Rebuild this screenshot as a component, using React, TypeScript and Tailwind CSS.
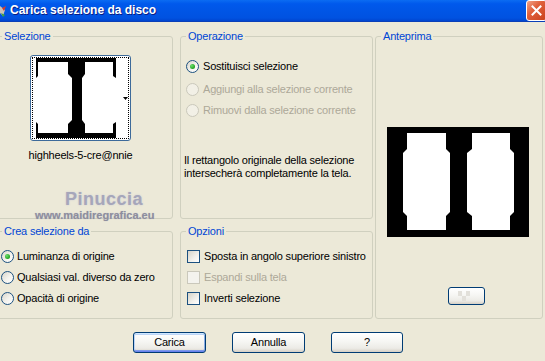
import React from "react";

function Radio({ checked = false, disabled = false }: { checked?: boolean; disabled?: boolean }) {
  return (
    <div
      className={
        "w-[13px] h-[13px] rounded-full border flex items-center justify-center shrink-0 " +
        (disabled
          ? "border-[#CAC8BB] bg-[#F2F0E6]"
          : "border-[#1C5180] bg-[linear-gradient(135deg,#D8D5CA_0%,#F4F3EE_55%,#FFFFFF_100%)]")
      }
    >
      {checked && (
        <div className="w-[5px] h-[5px] rounded-full bg-[radial-gradient(circle_at_35%_35%,#6CE06C_0%,#21A121_70%,#1A861A_100%)]" />
      )}
    </div>
  );
}

function Check({ disabled = false }: { disabled?: boolean }) {
  return (
    <div
      className={
        "w-[13px] h-[13px] border shrink-0 " +
        (disabled
          ? "border-[#CAC8BB] bg-[#F4F3EE]"
          : "border-[#1C5180] bg-[linear-gradient(135deg,#D6D3C8_0%,#F2F1EC_60%,#FFFFFF_100%)]")
      }
    />
  );
}

function XPButton({ label, w, def = false }: { label: string; w: string; def?: boolean }) {
  return (
    <div
      className={
        w +
        " h-[21px] rounded-[3px] border border-[#003C74] flex items-center justify-center text-[11px] text-black bg-[linear-gradient(180deg,#FFFFFF_0%,#F6F6F3_45%,#ECEBE6_80%,#D6D0C5_100%)] " +
        (def
          ? "shadow-[inset_0_1px_0_#CEE7FF,inset_0_-1px_0_#6982EE,inset_1px_0_0_#BCD4F6,inset_-1px_0_0_#89ADE4,inset_0_2px_0_#BCD4F6,inset_0_-2px_0_#7D99EA]"
          : "")
      }
    >
      {label}
    </div>
  );
}

function Legend({ children }: { children: React.ReactNode }) {
  return (
    <legend className="ml-[5px] px-[2px] text-[#0046D5] text-[11px] leading-[13px]">{children}</legend>
  );
}

export default function App() {
  return (
    <div className="w-[545px] h-[361px] overflow-hidden bg-[#ECE9D8] flex flex-col font-['Liberation_Sans',Arial,sans-serif] text-[11px] leading-[13px] tracking-[-0.2px] text-black">
      {/* Title bar */}
      <div className="h-[22px] shrink-0 flex items-center bg-[linear-gradient(180deg,#0B6CF2_0%,#0059EC_18%,#0055E5_55%,#0052E1_85%,#0045CF_100%)] border-b border-[#0A3FB8]">
        <svg width="16" height="16" viewBox="0 0 16 16" className="-ml-[9px] shrink-0">
          <path d="M9 3 L14 7 L12 13 L8 9 Z" fill="#C9C2B8" />
          <path d="M11 5 L15 3 L13 8 Z" fill="#D83A2A" />
          <path d="M10 10 L14 12 L12 14 Z" fill="#3BA33B" />
        </svg>
        <span className="ml-[3px] text-white font-bold text-[12px] tracking-normal [text-shadow:1px_1px_0_#0A1C83]">
          Carica selezione da disco
        </span>
        <div className="ml-auto -mr-[2px] -mt-[1px] w-[21px] h-[21px] rounded-[3px] border border-white flex items-center justify-center bg-[linear-gradient(135deg,#F2A488_0%,#E0603B_40%,#C9421E_100%)]">
          <svg width="11" height="11" viewBox="0 0 11 11">
            <path d="M1.5 1.5 L9.5 9.5 M9.5 1.5 L1.5 9.5" stroke="white" strokeWidth="2" strokeLinecap="square" />
          </svg>
        </div>
      </div>

      {/* Content */}
      <div className="flex mt-[8px] -ml-[4px]">
        {/* Left column */}
        <div className="w-[177px] flex flex-col gap-[6px] shrink-0">
          <fieldset className="h-[189px] border border-[#D0D0BF] rounded-[3px]">
            <Legend>Selezione</Legend>
            <div className="flex flex-col items-start">
              <div className="ml-[33px] mt-[12px] w-[101px] flex flex-col items-center">
                <div className="w-[101px] h-[86px] rounded-[3px] border border-[#3D6A9A] bg-white p-[1px]">
                  <div className="w-full h-full border border-dotted border-black flex items-center">
                    <svg width="80" height="80" viewBox="0 0 80 80" className="ml-[3px] shrink-0">
                      <rect x="0" y="0" width="80" height="80" fill="black" />
                      <polygon points="2,4 32,4 32,16 36,20 36,62 32,66 32,75 2,75 2,66 0,64 0,20 2,18" fill="white" />
                      <polygon points="49,4 77,4 77,18 80,20 80,64 77,66 77,75 49,75 49,66 46,62 46,20 49,16" fill="white" />
                    </svg>
                    <svg width="5" height="3" viewBox="0 0 5 3" className="ml-[7px] shrink-0">
                      <polygon points="0,0 5,0 2.5,3" fill="black" />
                    </svg>
                  </div>
                </div>
                <div className="mt-[8px] whitespace-nowrap">highheels-5-cre@nnie</div>
              </div>
              <div className="ml-[68px] mt-[28px] text-[18px] leading-[18px] font-bold text-[#A6A6BA] tracking-[0.5px] [text-shadow:0_0_2px_#C8C8D4]">
                Pinuccia
              </div>
              <div className="ml-[38px] mt-[1px] text-[11px] leading-[12px] font-bold text-[#8E8E9E] tracking-normal [text-shadow:0_0_1px_#B8B8C4]">
                www.maidiregrafica.eu
              </div>
            </div>
          </fieldset>
          <fieldset className="h-[94px] border border-[#D0D0BF] rounded-[3px]">
            <Legend>Crea selezione da</Legend>
            <div className="flex flex-col gap-[8px] mt-[12px] ml-[4px]">
              <div className="flex items-center gap-[3px]">
                <Radio checked />
                <span>Luminanza di origine</span>
              </div>
              <div className="flex items-center gap-[3px]">
                <Radio />
                <span>Qualsiasi val. diverso da zero</span>
              </div>
              <div className="flex items-center gap-[3px]">
                <Radio />
                <span>Opacità di origine</span>
              </div>
            </div>
          </fieldset>
        </div>

        {/* Middle column */}
        <div className="ml-[7px] w-[193px] flex flex-col gap-[6px] shrink-0">
          <fieldset className="h-[189px] border border-[#D0D0BF] rounded-[3px]">
            <Legend>Operazione</Legend>
            <div className="flex flex-col items-start">
              <div className="flex items-center gap-[4px] ml-[5px] mt-[17px]">
                <Radio checked />
                <span>Sostituisci selezione</span>
              </div>
              <div className="flex items-center gap-[4px] ml-[5px] mt-[10px] text-[#ACA899]">
                <Radio disabled />
                <span>Aggiungi alla selezione corrente</span>
              </div>
              <div className="flex items-center gap-[4px] ml-[5px] mt-[8px] text-[#ACA899]">
                <Radio disabled />
                <span>Rimuovi dalla selezione corrente</span>
              </div>
              <div className="ml-[3px] mt-[37px]">
                Il rettangolo originale della selezione
                <br />
                intersecherà completamente la tela.
              </div>
            </div>
          </fieldset>
          <fieldset className="h-[94px] border border-[#D0D0BF] rounded-[3px]">
            <Legend>Opzioni</Legend>
            <div className="flex flex-col gap-[8px] mt-[12px] ml-[6px]">
              <div className="flex items-center gap-[4px]">
                <Check />
                <span>Sposta in angolo superiore sinistro</span>
              </div>
              <div className="flex items-center gap-[4px] text-[#ACA899]">
                <Check disabled />
                <span>Espandi sulla tela</span>
              </div>
              <div className="flex items-center gap-[4px]">
                <Check />
                <span>Inverti selezione</span>
              </div>
            </div>
          </fieldset>
        </div>

        {/* Right column */}
        <div className="ml-[2px] w-[168px] shrink-0">
          <fieldset className="h-[289px] border border-[#D0D0BF] rounded-[3px]">
            <Legend>Anteprima</Legend>
            <div className="flex flex-col items-start">
              <svg width="142" height="110" viewBox="0 0 142 110" className="ml-[11px] mt-[84px]">
                <rect x="0" y="0" width="142" height="110" fill="black" />
                <polygon points="20,6 59,6 59,22 63,26 63,85 59,89 59,103 20,103 20,89 16,85 16,26 20,22" fill="white" />
                <polygon points="85,6 123,6 123,22 127,26 127,85 123,89 123,103 85,103 85,89 80,85 80,26 85,22" fill="white" />
              </svg>
              <div className="ml-[72px] mt-[50px] w-[37px] h-[18px] rounded-[3px] border border-[#003C74] flex items-center bg-[linear-gradient(180deg,#FFFFFF_0%,#F6F6F3_45%,#ECEBE6_80%,#D6D0C5_100%)]">
                <svg width="12" height="10" viewBox="0 0 12 10" className="ml-[9px]">
                  <rect x="0" y="0" width="4" height="5" fill="#E2E0DA" />
                  <rect x="8" y="0" width="4" height="5" fill="#E2E0DA" />
                  <rect x="4" y="5" width="4" height="5" fill="#E2E0DA" />
                </svg>
              </div>
            </div>
          </fieldset>
        </div>
      </div>

      {/* Buttons */}
      <div className="flex gap-[26px] ml-[133px] mt-[13px]">
        <XPButton label="Carica" w="w-[73px]" def />
        <XPButton label="Annulla" w="w-[73px]" />
        <XPButton label="?" w="w-[72px]" />
      </div>
    </div>
  );
}
